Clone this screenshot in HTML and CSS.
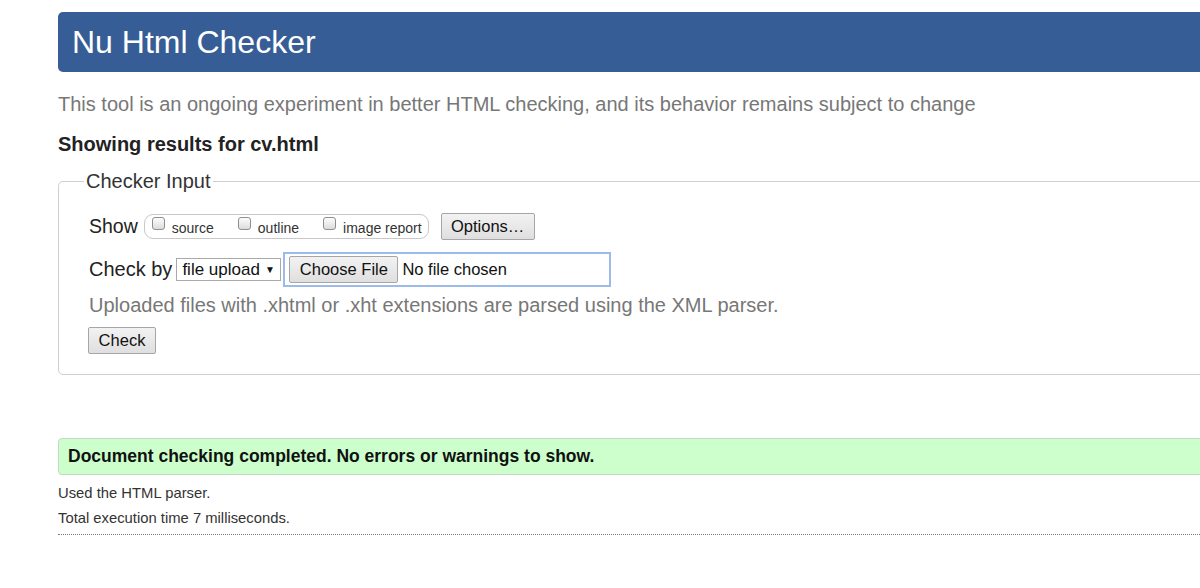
FILE: index.html
```html
<!DOCTYPE html>
<html>
<head>
<meta charset="utf-8">
<title>Nu Html Checker</title>
<link rel="stylesheet" href="styles.css">
</head>
<body>
<div class="page">
  <h1 class="banner">Nu Html Checker</h1>
  <p class="desc">This tool is an ongoing experiment in better HTML checking, and its behavior remains subject to change</p>
  <h2 class="results">Showing results for cv.html</h2>
  <fieldset class="checker">
    <legend class="legend">Checker Input</legend>
    <div class="row row-show">
      <span class="label">Show</span>
      <div class="opts">
        <span class="opt"><span class="cb"></span><span class="opt-text">source</span></span>
        <span class="opt"><span class="cb"></span><span class="opt-text">outline</span></span>
        <span class="opt"><span class="cb"></span><span class="opt-text">image report</span></span>
      </div>
      <span class="btn btn-options">Options…</span>
    </div>
    <div class="row row-check">
      <span class="label">Check by</span>
      <span class="select">file upload <span class="arrow">▼</span></span>
      <div class="file">
        <span class="btn btn-file">Choose File</span>
        <span class="file-text">No file chosen</span>
      </div>
    </div>
    <p class="hint">Uploaded files with .xhtml or .xht extensions are parsed using the XML parser.</p>
    <span class="btn btn-check">Check</span>
  </fieldset>
  <div class="success">Document checking completed. No errors or warnings to show.</div>
  <p class="small first">Used the HTML parser.</p>
  <p class="small">Total execution time 7 milliseconds.</p>
  <hr class="rule">
</div>
</body>
</html>
```

FILE: styles.css
```css
html { overflow: hidden; }
body {
  margin: 0;
  background: #fff;
  font-family: "Liberation Sans", Arial, sans-serif;
  color: #222;
}
.page {
  margin-left: 58px;
  width: 1250px;
}
.banner {
  margin: 12px 0 0;
  height: 60px;
  line-height: 60px;
  background: #365d95;
  color: #fff;
  font-weight: normal;
  font-size: 32px;
  padding-left: 14px;
  border-radius: 5px 0 0 5px;
}
.desc {
  margin: 20px 0 0;
  font-size: 20px;
  line-height: 24px;
  color: #777;
}
.results {
  margin: 16px 0 0;
  font-size: 20px;
  line-height: 24px;
  font-weight: bold;
  color: #222;
}
.checker {
  margin: 13px 0 0;
  padding: 20px 20px 20px 30px;
  border: 1px solid #cfcfcf;
  border-radius: 5px;
}
.legend {
  padding: 0 2px;
  margin-left: -5px;
  font-size: 20px;
  line-height: 24px;
  color: #333;
}
.row {
  display: flex;
  align-items: center;
}
.label {
  font-size: 19.5px;
  color: #222;
}
.row-check .label { font-size: 20px; }
.row-show { height: 27px; }
.opts {
  display: flex;
  align-items: center;
  margin-left: 6px;
  height: 23px;
  border: 1px solid #c8c8c8;
  border-radius: 9px;
  padding: 0 6px 0 7px;
  gap: 24px;
}
.opt {
  display: flex;
  align-items: center;
}
.cb {
  width: 11px;
  height: 11px;
  border: 1px solid #8f8f8f;
  border-radius: 3px;
  background: linear-gradient(#fcfcfc, #dcdcdc);
  margin-top: -6px;
  margin-right: 7px;
}
.opt-text {
  font-size: 14px;
  color: #333;
  margin-top: 2px;
}
.btn {
  display: inline-flex;
  align-items: center;
  justify-content: center;
  box-sizing: border-box;
  border: 1px solid #a6a6a6;
  border-radius: 2px;
  background: linear-gradient(#f2f2f2, #dfdfdf);
  color: #111;
  font-size: 16.5px;
}
.btn-options {
  margin-left: 12px;
  width: 94px;
  height: 27px;
}
.row-check {
  margin-top: 12px;
  height: 35px;
}
.select {
  display: inline-flex;
  align-items: center;
  box-sizing: border-box;
  margin-left: 4px;
  height: 23px;
  width: 105px;
  padding-left: 5px;
  border: 1px solid #a9a9a9;
  font-size: 17px;
  color: #111;
}
.arrow {
  font-size: 10px;
  margin-left: 5px;
}
.file {
  display: flex;
  align-items: center;
  box-sizing: border-box;
  margin-left: 2px;
  width: 328px;
  height: 35px;
  border: 2px solid #9dbbea;
  padding-left: 4px;
}
.btn-file {
  width: 109px;
  height: 27px;
}
.file-text {
  margin-left: 4px;
  font-size: 16.5px;
  color: #111;
}
.hint {
  margin: 6px 0 0;
  font-size: 20px;
  line-height: 24px;
  color: #777;
}
.btn-check {
  margin-top: 10px;
  margin-left: -1px;
  width: 68px;
  height: 27px;
}
.success {
  margin-top: 63px;
  box-sizing: border-box;
  height: 37px;
  line-height: 35px;
  background: #ccffcc;
  border: 1px solid #c4d9c4;
  border-radius: 4px 0 0 4px;
  padding-left: 9px;
  font-weight: bold;
  font-size: 17.5px;
  color: #111;
}
.small {
  margin: 7px 0 0;
  font-size: 14.8px;
  line-height: 18px;
  color: #333;
}
.small.first { margin-top: 9px; }
.rule {
  margin: 7px 0 0;
  border: 0;
  border-top: 1px dotted #777;
  height: 0;
}
```
